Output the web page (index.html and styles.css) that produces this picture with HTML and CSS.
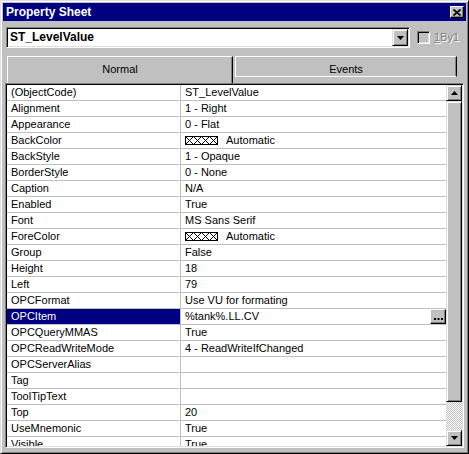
FILE: index.html
```html
<!DOCTYPE html>
<html>
<head>
<meta charset="utf-8">
<title>Property Sheet</title>
<link rel="stylesheet" href="styles.css">
</head>
<body>
<div class="window">
  <div class="titlebar">
    <span class="title">Property Sheet</span>
    <div class="close">
      <svg width="8" height="7" viewBox="0 0 8 7"><path d="M0.5 0.5 L7.5 6.5 M7.5 0.5 L0.5 6.5" stroke="#000" stroke-width="1.6" fill="none"/></svg>
    </div>
  </div>
  <div class="toolbar">
    <div class="combo">
      <div class="combo-text">ST_LevelValue</div>
      <div class="btn combo-btn">
        <svg width="7" height="4" viewBox="0 0 7 4"><polygon points="0,0 7,0 3.5,4" fill="#000"/></svg>
      </div>
    </div>
    <div class="check"></div>
    <span class="check-label"><u>1</u>By1</span>
  </div>
  <div class="tabs">
    <div class="tab tab-active">Normal</div>
    <div class="tab tab-back">Events</div>
  </div>
  <div class="grid">
    <div class="rows">
      <div class="row"><div class="name">(ObjectCode)</div><div class="value">ST_LevelValue</div></div>
      <div class="row"><div class="name">Alignment</div><div class="value">1 - Right</div></div>
      <div class="row"><div class="name">Appearance</div><div class="value">0 - Flat</div></div>
      <div class="row"><div class="name">BackColor</div><div class="value"><svg class="swatch" width="33" height="9" viewBox="0 0 33 9"><rect x="0.5" y="0.5" width="32" height="8" fill="#fff" stroke="#000"/><polyline points="0.5,0.5 8.5,8.5 16.5,0.5 24.5,8.5 32.5,0.5" fill="none" stroke="#000"/><polyline points="0.5,8.5 8.5,0.5 16.5,8.5 24.5,0.5 32.5,8.5" fill="none" stroke="#000"/></svg>Automatic</div></div>
      <div class="row"><div class="name">BackStyle</div><div class="value">1 - Opaque</div></div>
      <div class="row"><div class="name">BorderStyle</div><div class="value">0 - None</div></div>
      <div class="row"><div class="name">Caption</div><div class="value">N/A</div></div>
      <div class="row"><div class="name">Enabled</div><div class="value">True</div></div>
      <div class="row"><div class="name">Font</div><div class="value">MS Sans Serif</div></div>
      <div class="row"><div class="name">ForeColor</div><div class="value"><svg class="swatch" width="33" height="9" viewBox="0 0 33 9"><rect x="0.5" y="0.5" width="32" height="8" fill="#fff" stroke="#000"/><polyline points="0.5,0.5 8.5,8.5 16.5,0.5 24.5,8.5 32.5,0.5" fill="none" stroke="#000"/><polyline points="0.5,8.5 8.5,0.5 16.5,8.5 24.5,0.5 32.5,8.5" fill="none" stroke="#000"/></svg>Automatic</div></div>
      <div class="row"><div class="name">Group</div><div class="value">False</div></div>
      <div class="row"><div class="name">Height</div><div class="value">18</div></div>
      <div class="row"><div class="name">Left</div><div class="value">79</div></div>
      <div class="row"><div class="name">OPCFormat</div><div class="value">Use VU for formating</div></div>
      <div class="row"><div class="name selected">OPCItem</div><div class="value">%tank%.LL.CV<div class="btn dots"><svg width="9" height="2" viewBox="0 0 9 2"><rect x="0" y="0" width="2" height="2" fill="#000"/><rect x="3.5" y="0" width="2" height="2" fill="#000"/><rect x="7" y="0" width="2" height="2" fill="#000"/></svg></div></div></div>
      <div class="row"><div class="name">OPCQueryMMAS</div><div class="value">True</div></div>
      <div class="row"><div class="name">OPCReadWriteMode</div><div class="value">4 - ReadWriteIfChanged</div></div>
      <div class="row"><div class="name">OPCServerAlias</div><div class="value"></div></div>
      <div class="row"><div class="name">Tag</div><div class="value"></div></div>
      <div class="row"><div class="name">ToolTipText</div><div class="value"></div></div>
      <div class="row"><div class="name">Top</div><div class="value">20</div></div>
      <div class="row"><div class="name">UseMnemonic</div><div class="value">True</div></div>
      <div class="row"><div class="name">Visible</div><div class="value">True</div></div>
    </div>
    <div class="scrollbar">
      <div class="btn sb-btn">
        <svg width="7" height="4" viewBox="0 0 7 4"><polygon points="3.5,0 7,4 0,4" fill="#000"/></svg>
      </div>
      <div class="btn thumb"></div>
      <div class="track"></div>
      <div class="btn sb-btn">
        <svg width="7" height="4" viewBox="0 0 7 4"><polygon points="0,0 7,0 3.5,4" fill="#000"/></svg>
      </div>
    </div>
  </div>
</div>
</body>
</html>
```
FILE: styles.css
```css
* { box-sizing: border-box; }

html, body {
  margin: 0;
  padding: 0;
  background: #c0c0c0;
}

body {
  font-family: "Liberation Sans", Arial, sans-serif;
  font-size: 11px;
  color: #000;
}

.window {
  width: 469px;
  height: 454px;
  background: #c0c0c0;
  border: 1px solid;
  border-color: #dfdfdf #000 #000 #dfdfdf;
  box-shadow: inset 1px 1px #fff, inset -1px -1px #808080;
  padding: 2px;
  display: flex;
  flex-direction: column;
  overflow: hidden;
}

.titlebar {
  height: 18px;
  background: #000080;
  display: flex;
  align-items: center;
  justify-content: space-between;
  padding-left: 3px;
  padding-right: 2px;
  flex: none;
}

.title {
  color: #fff;
  font-weight: bold;
  font-size: 12px;
  line-height: 14px;
}

.btn {
  background: #c0c0c0;
  border: 1px solid;
  border-color: #fff #000 #000 #fff;
  box-shadow: inset -1px -1px #808080;
  display: flex;
  align-items: center;
  justify-content: center;
}

.close {
  width: 14px;
  height: 12px;
  background: #c0c0c0;
  border: 1px solid;
  border-color: #fff #000 #000 #fff;
  box-shadow: inset -1px -1px #808080;
  display: flex;
  align-items: center;
  justify-content: center;
}

.close svg { display: block; }

.toolbar {
  display: flex;
  align-items: center;
  margin-top: 6px;
  padding-left: 3px;
  height: 21px;
  flex: none;
}

.combo {
  width: 404px;
  height: 21px;
  background: #fff;
  border: 1px solid;
  border-color: #808080 #fff #fff #808080;
  box-shadow: inset 1px 1px #000, inset -1px -1px #dfdfdf;
  padding: 1px;
  display: flex;
}

.combo-text {
  flex: 1;
  font-weight: bold;
  font-size: 12px;
  line-height: 17px;
  padding-left: 2px;
}

.combo-btn {
  width: 16px;
  height: 17px;
  border-color: #dfdfdf #000 #000 #dfdfdf;
  box-shadow: inset 1px 1px #fff, inset -1px -1px #808080;
}

.combo-btn svg, .sb-btn svg { display: block; }

.check {
  width: 13px;
  height: 13px;
  margin-left: 7px;
  background: #c0c0c0;
  border: 1px solid;
  border-color: #808080 #fff #fff #808080;
  box-shadow: inset 1px 1px #000, inset -1px -1px #dfdfdf;
}

.check-label {
  margin-left: 4px;
  color: #808080;
  text-shadow: 1px 1px 0 #fff;
  line-height: 13px;
}

.tabs {
  display: flex;
  align-items: flex-start;
  height: 27px;
  margin-top: 8px;
  padding-left: 4px;
  flex: none;
}

.tab {
  text-align: center;
  line-height: 14px;
  padding-top: 5px;
  border-top: 1px solid #fff;
  border-left: 1px solid #fff;
  border-right: 1px solid #000;
  box-shadow: inset -1px 0 #808080;
}

.tab-active {
  width: 226px;
  height: 27px;
}

.tab-back {
  width: 222px;
  height: 21px;
  margin-left: 2px;
  border-bottom: 1px solid #fff;
}

.grid {
  margin-left: 2px;
  width: 459px;
  height: 365px;
  border: 1px solid;
  border-color: #808080 #fff #fff #808080;
  box-shadow: inset 1px 1px #000, inset -1px -1px #dfdfdf;
  padding: 1px;
  display: flex;
  flex: none;
  overflow: hidden;
}

.rows {
  flex: 1;
  background: #fff;
  overflow: hidden;
}

.row {
  display: flex;
  height: 16px;
  border-bottom: 1px solid #c0c0c0;
}

.name {
  width: 174px;
  flex: none;
  border-right: 1px solid #c0c0c0;
  padding-left: 4px;
  line-height: 15px;
  white-space: nowrap;
}

.name.selected {
  background: #000080;
  color: #fff;
}

.value {
  flex: 1;
  display: flex;
  align-items: center;
  padding-left: 4px;
  line-height: 15px;
  white-space: nowrap;
}

.swatch {
  display: block;
  margin-right: 8px;
}

.dots {
  margin-left: auto;
  width: 16px;
  height: 15px;
  align-items: flex-end;
  padding-bottom: 3px;
}

.dots svg { display: block; }

.scrollbar {
  width: 16px;
  flex: none;
  display: flex;
  flex-direction: column;
}

.sb-btn {
  width: 16px;
  height: 16px;
  flex: none;
  border-color: #dfdfdf #000 #000 #dfdfdf;
  box-shadow: inset 1px 1px #fff, inset -1px -1px #808080;
}

.thumb {
  height: 301px;
  flex: none;
  border-color: #dfdfdf #000 #000 #dfdfdf;
  box-shadow: inset 1px 1px #fff, inset -1px -1px #808080;
}

.track {
  flex: 1;
  background-color: #c0c0c0;
  background-image: conic-gradient(#fff 25%, #c0c0c0 0 50%, #fff 0 75%, #c0c0c0 0);
  background-size: 2px 2px;
}
```
